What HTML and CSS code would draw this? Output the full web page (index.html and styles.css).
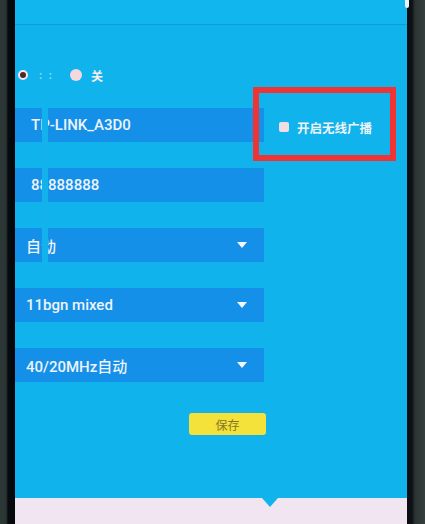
FILE: index.html
```html
<!DOCTYPE html>
<html lang="zh">
<head>
<meta charset="utf-8">
<title>无线设置</title>
<link rel="stylesheet" href="styles.css">
</head>
<body>
<div class="device">
  <div class="bezel bezel-left"></div>
  <div class="screen">
    <div class="topbar"></div>
    <div class="content">
      <div class="radio-row">
        <span class="radio radio-on"></span>
        <span class="ghost">: :</span>
        <span class="radio radio-off"></span>
        <span class="radio-label">关</span>
      </div>
      <div class="form">
        <div class="row">
          <div class="field field-input">TP-LINK_A3D0</div>
          <label class="bcast"><span class="check"></span>开启无线广播</label>
        </div>
        <div class="row">
          <div class="field field-input">88888888</div>
        </div>
        <div class="row">
          <div class="field field-select">自动<span class="caret"></span></div>
        </div>
        <div class="row">
          <div class="field field-select">11bgn mixed<span class="caret"></span></div>
        </div>
        <div class="row">
          <div class="field field-select">40/20MHz自动<span class="caret"></span></div>
        </div>
        <div class="actions">
          <button class="save">保存</button>
        </div>
      </div>
    </div>
    <div class="footer"><span class="notch"></span></div>
    <div class="glitch"></div>
    <div class="redbox"></div>
  </div>
  <div class="bezel bezel-right"><span class="glare"></span></div>
</div>
</body>
</html>
```

FILE: styles.css
```css
html, body {
  margin: 0;
  padding: 0;
  background: #1b2322;
}
body {
  font-family: Roboto, "Noto Sans CJK SC", "Noto Sans", sans-serif;
  color: #ffffff;
}
.device {
  display: flex;
  width: 425px;
  height: 524px;
  overflow: hidden;
}
.bezel {
  flex: none;
  height: 524px;
}
.bezel-left {
  width: 15px;
  background: linear-gradient(to right, #2c3836 0, #2a3533 6px, #070b0e 8px, #05080b 15px);
}
.bezel-right {
  width: 18px;
  position: relative;
  background: linear-gradient(to right, #0a0d12 0, #0e1217 5px, #2b3433 8px, #34403e 18px);
}
.glare {
  position: absolute;
  left: -2px;
  top: 0;
  width: 4px;
  height: 8px;
  border-radius: 0 0 3px 3px;
  background: #e9f2f6;
}
.screen {
  position: relative;
  width: 392px;
  flex: none;
  height: 524px;
  display: flex;
  flex-direction: column;
  background: #10b3ec;
}
.topbar {
  height: 24px;
  background: #12b6ee;
  border-bottom: 1px solid #0b9fd6;
}
.content {
  display: flex;
  flex-direction: column;
}
.radio-row {
  display: flex;
  align-items: center;
  height: 14px;
  margin-top: 43px;
  padding-left: 3px;
}
.radio {
  display: block;
  border-radius: 50%;
  box-sizing: border-box;
}
.radio-on {
  width: 10px;
  height: 10px;
  background: #4a2a2e;
  border: 2.5px solid #f6e8ec;
}
.ghost {
  margin-left: 11px;
  font-size: 11px;
  font-weight: 700;
  letter-spacing: 2px;
  color: #8edcf6;
  width: 31px;
}
.radio-off {
  width: 12px;
  height: 12px;
  background: #f4d8de;
}
.radio-label {
  margin-left: 9px;
  font-size: 12px;
  font-weight: 700;
  color: #f6eef2;
}
.form {
  display: flex;
  flex-direction: column;
  width: 251px;
  margin-top: 26px;
  gap: 26px;
}
.row {
  display: flex;
  align-items: center;
}
.field {
  flex: none;
  width: 249px;
  height: 34px;
  box-sizing: border-box;
  display: flex;
  align-items: center;
  position: relative;
  background: #1590e9;
  font-size: 15px;
  font-weight: 500;
  color: #eef3fa;
}
.field-input {
  padding-left: 16px;
}
.field-select {
  padding-left: 11px;
}
.caret {
  position: absolute;
  left: 222px;
  top: 14px;
  width: 0;
  height: 0;
  border-left: 5px solid transparent;
  border-right: 5px solid transparent;
  border-top: 6px solid #f4f7fb;
}
.bcast {
  display: flex;
  align-items: center;
  flex: none;
  margin-left: 15px;
  margin-top: 4px;
  font-size: 12.5px;
  font-weight: 700;
  color: #eef3f7;
  white-space: nowrap;
}
.check {
  display: block;
  width: 10px;
  height: 10px;
  margin-right: 8px;
  border-radius: 2px;
  background: #f1dde4;
}
.actions {
  display: flex;
  justify-content: flex-end;
  margin-top: 5px;
}
.save {
  width: 77px;
  height: 22px;
  padding: 0;
  border: none;
  border-radius: 3px;
  background: #f4e13a;
  font-family: "Noto Sans CJK SC", sans-serif;
  font-size: 12px;
  color: #857628;
}
.footer {
  margin-top: auto;
  height: 26px;
  position: relative;
  background: #f1e5f1;
}
.notch {
  position: absolute;
  left: 247px;
  top: 0;
  width: 0;
  height: 0;
  border-left: 8px solid transparent;
  border-right: 8px solid transparent;
  border-top: 9px solid #10b3ec;
}
.glitch {
  position: absolute;
  left: 27px;
  top: 108px;
  width: 6px;
  height: 154px;
  background: #13b2ec;
}
.redbox {
  position: absolute;
  left: 238px;
  top: 87px;
  width: 143px;
  height: 74px;
  box-sizing: border-box;
  border: 6px solid #ee3434;
}
```
